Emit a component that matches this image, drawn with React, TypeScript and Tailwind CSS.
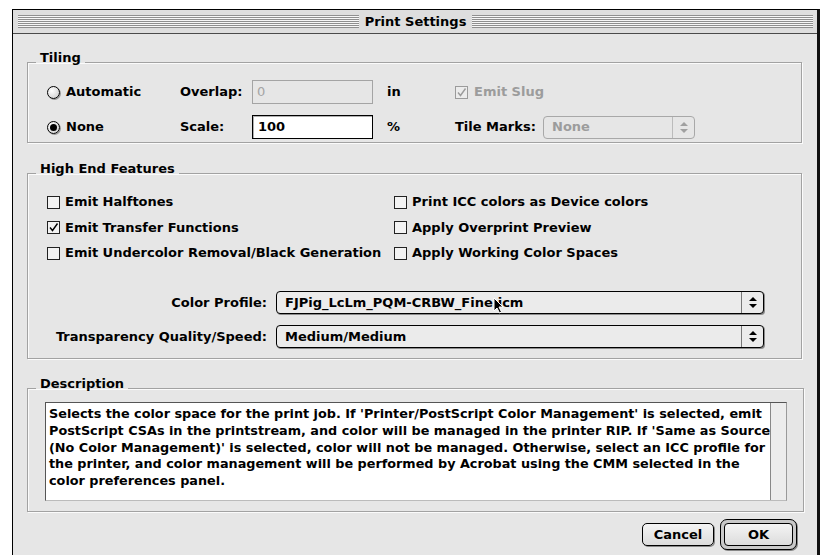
import React from "react";

const stripes =
  "flex-1 h-[13px] bg-[repeating-linear-gradient(to_bottom,#8f8f8f_0px,#8f8f8f_1px,#f7f7f7_1px,#f7f7f7_2px)]";

const Radio = ({ on }: { on?: boolean }) => (
  <span className="w-[13px] h-[13px] rounded-full border border-black bg-[radial-gradient(circle_at_35%_35%,#ffffff,#c8c8c8)] flex items-center justify-center shadow-[1px_1px_0_#9a9a9a]">
    {on && <span className="w-[7px] h-[7px] rounded-full bg-black" />}
  </span>
);

const Check = ({ on, dim }: { on?: boolean; dim?: boolean }) => (
  <span
    className={
      "w-[13px] h-[13px] border flex items-center justify-center " +
      (dim ? "border-[#9b9b9b] bg-[#ececec]" : "border-[#222] bg-[#f3f3f3]")
    }
  >
    {on && (
      <svg width="11" height="11" viewBox="0 0 11 11">
        <path
          d="M2 5.5 L4.5 8.5 L9.5 1.5"
          fill="none"
          stroke={dim ? "#9b9b9b" : "#000"}
          strokeWidth="1.4"
        />
      </svg>
    )}
  </span>
);

const Arrows = ({ dim }: { dim?: boolean }) => (
  <svg width="8" height="11" viewBox="0 0 8 11">
    <path d="M4 0 L8 4 L0 4 Z M0 7 L8 7 L4 11 Z" fill={dim ? "#a0a0a0" : "#000"} />
  </svg>
);

const Popup = ({
  value,
  w,
  dim,
  children,
}: {
  value: string;
  w: string;
  dim?: boolean;
  children?: React.ReactNode;
}) => (
  <div
    className={
      "relative h-[23px] rounded-[4px] border flex items-stretch " +
      w +
      (dim
        ? " border-[#a8a8a8] text-[#9c9c9c] bg-[#e6e6e6]"
        : " border-black bg-[#ebebeb] shadow-[1px_1px_0_#8c8c8c]")
    }
  >
    <span className="flex-1 pl-[8px] flex items-center whitespace-nowrap">{value}</span>
    <span
      className={
        "w-[22px] border-l flex items-center justify-center " +
        (dim ? "border-[#bbbbbb]" : "border-[#777]")
      }
    >
      <Arrows dim={dim} />
    </span>
    {children}
  </div>
);

const Group = ({
  title,
  className,
  children,
}: {
  title: string;
  className: string;
  children: React.ReactNode;
}) => (
  <fieldset
    className={
      "border border-[#a2a2a2] shadow-[1px_1px_0_#fbfbfb,inset_1px_1px_0_#fbfbfb] " + className
    }
  >
    <legend className="ml-[8px] px-[4px] leading-[16px]">
      <span className="relative -top-[4px]">{title}</span>
    </legend>
    {children}
  </fieldset>
);

const description = [
  "Selects the color space for the print job. If 'Printer/PostScript Color Management' is selected, emit",
  "PostScript CSAs in the printstream, and color will be managed in the printer RIP. If 'Same as Source",
  "(No Color Management)' is selected, color will not be managed. Otherwise, select an ICC profile for",
  "the printer, and color management will be performed by Acrobat using the CMM selected in the",
  "color preferences panel.",
];

export default function App() {
  return (
    <div className="w-[822px] h-[555px] bg-white overflow-hidden pt-[9px] pl-[12px] font-['DejaVu_Sans',sans-serif] font-bold text-[13px] text-black">
      <div className="w-[808px] h-[560px] border-t border-l border-black border-r-[3px] border-r-[#111] bg-[#e6e6e6] flex flex-col">
        {/* title bar */}
        <div className="h-[24px] bg-[#dedede] border-b border-[#4a4a4a] flex items-center pl-[5px] pr-[4px]">
          <div className={stripes} />
          <span className="px-[6px] text-[13px] leading-[16px]">Print Settings</span>
          <div className={stripes} />
        </div>

        <div className="flex flex-col pl-[14px] pr-[15px]">
          {/* Tiling */}
          <Group title="Tiling" className="mt-[20px] pt-[10px] pb-[3px]">
            <div className="flex items-center h-[24px] pl-[19px]">
              <span className="w-[133px] flex items-center gap-[6px]">
                <Radio />
                Automatic
              </span>
              <span className="w-[72px]">Overlap:</span>
              <span className="w-[121px] h-[24px] border border-[#a4a4a4] bg-[#e6e6e6] text-[#a4a4a4] font-normal pl-[4px] flex items-center">
                0
              </span>
              <span className="w-[82px] pl-[14px]">in</span>
              <span className="flex items-center gap-[6px] text-[#9c9c9c]">
                <Check on dim />
                Emit Slug
              </span>
            </div>
            <div className="flex items-center h-[24px] mt-[11px] pl-[19px]">
              <span className="w-[133px] flex items-center gap-[6px]">
                <Radio on />
                None
              </span>
              <span className="w-[72px]">Scale:</span>
              <span className="w-[121px] h-[24px] border border-black bg-white shadow-[inset_1px_1px_0_#b0b0b0] pl-[5px] flex items-center">
                100
              </span>
              <span className="w-[82px] pl-[14px]">%</span>
              <span className="w-[88px]">Tile Marks:</span>
              <Popup value="None" w="w-[152px]" dim />
            </div>
          </Group>

          {/* High End Features */}
          <Group title="High End Features" className="mt-[22px] pt-[13px] pb-[10px]">
            <div className="grid grid-cols-[347px_1fr] pl-[19px] leading-[16px] gap-y-[9.5px]">
              <span className="flex items-center gap-[5px]">
                <Check />
                Emit Halftones
              </span>
              <span className="flex items-center gap-[5px]">
                <Check />
                Print ICC colors as Device colors
              </span>
              <span className="flex items-center gap-[5px]">
                <Check on />
                Emit Transfer Functions
              </span>
              <span className="flex items-center gap-[5px]">
                <Check />
                Apply Overprint Preview
              </span>
              <span className="flex items-center gap-[5px]">
                <Check />
                Emit Undercolor Removal/Black Generation
              </span>
              <span className="flex items-center gap-[5px]">
                <Check />
                Apply Working Color Spaces
              </span>
            </div>
            <div className="flex items-center mt-[30px]">
              <span className="w-[248px] text-right pr-[9px]">Color Profile:</span>
              <Popup value="FJPig_LcLm_PQM-CRBW_Fine.icm" w="w-[488px]">
                <svg
                  className="absolute left-[216px] top-[5px]"
                  width="11"
                  height="17"
                  viewBox="0 0 11 17"
                >
                  <path
                    d="M1 1 L1 14 L4 11 L6.5 16 L8.5 15 L6 10 L10 10 Z"
                    fill="#000"
                    stroke="#fff"
                    strokeWidth="1"
                  />
                </svg>
              </Popup>
            </div>
            <div className="flex items-center mt-[11px]">
              <span className="w-[248px] text-right pr-[9px]">Transparency Quality/Speed:</span>
              <Popup value="Medium/Medium" w="w-[488px]" />
            </div>
          </Group>

          {/* Description */}
          <Group title="Description" className="mt-[21px] pt-[6px] pb-[10px]">
            <div className="mx-[16px] ml-[17px] h-[99px] flex border border-[#555] border-r-[#999] border-b-[#bbb] bg-white">
              <div className="flex-1 pl-[3px] pt-[3px] leading-[16.8px] text-[12.8px] whitespace-nowrap">
                {description.map((line) => (
                  <div key={line}>{line}</div>
                ))}
              </div>
              <div className="w-[16px] border-l border-[#888] bg-[#ececec]" />
            </div>
          </Group>

          {/* buttons */}
          <div className="flex justify-end items-center gap-[6px] mt-[7px] mr-[5px]">
            <button className="w-[72px] h-[23px] rounded-[5px] border border-black bg-[linear-gradient(#f4f4f4,#dcdcdc)] shadow-[1px_1px_0_#888]">
              Cancel
            </button>
            <div className="w-[77px] h-[31px] rounded-[7px] border border-black bg-[#c9c9c9] p-[3px] shadow-[1px_1px_0_#888]">
              <button className="w-full h-full rounded-[4px] border border-black bg-[linear-gradient(#f4f4f4,#dcdcdc)]">
                OK
              </button>
            </div>
          </div>
        </div>
      </div>
    </div>
  );
}
